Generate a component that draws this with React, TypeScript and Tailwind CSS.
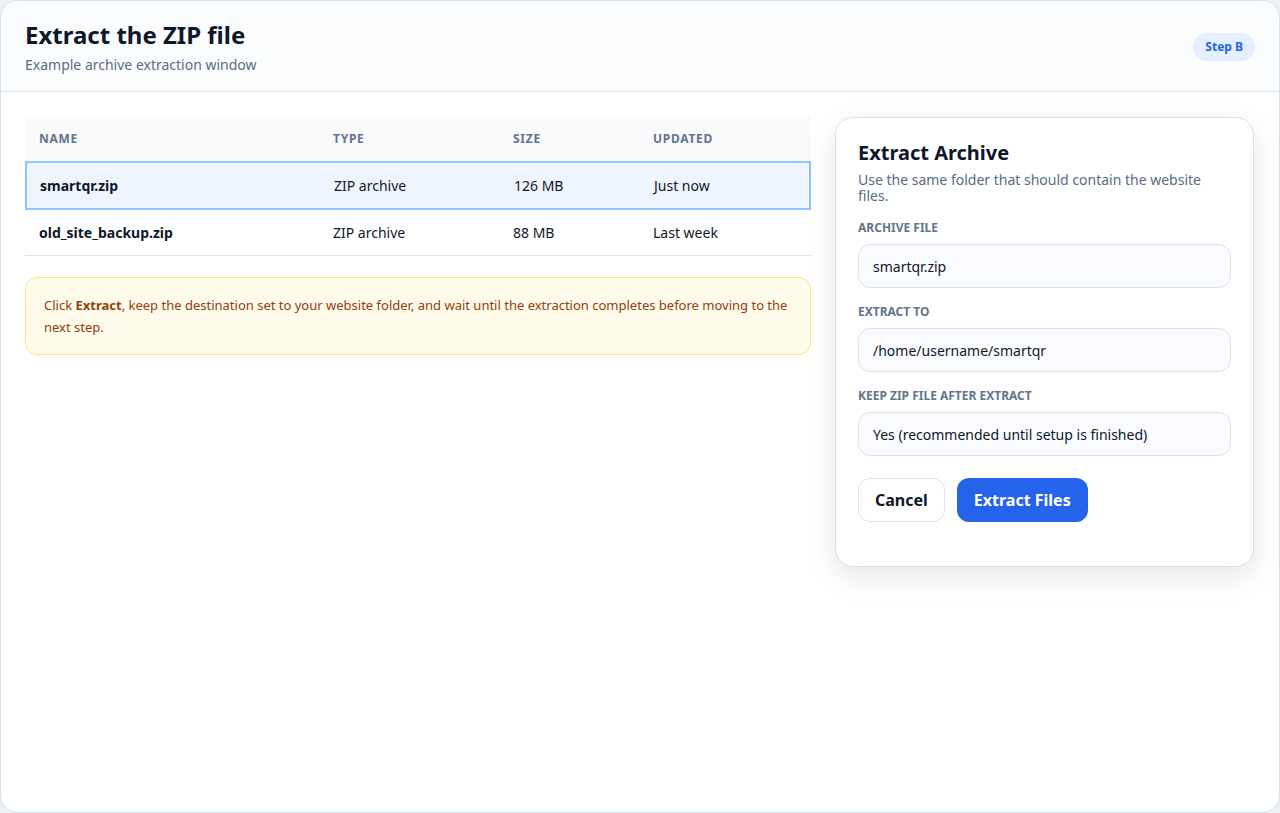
import React from 'react'

const rows = [
  { name: 'smartqr.zip', type: 'ZIP archive', size: '126 MB', updated: 'Just now', selected: true },
  { name: 'old_site_backup.zip', type: 'ZIP archive', size: '88 MB', updated: 'Last week', selected: false },
]

const Field = ({ label, value }: { label: string; value: string }) => (
  <div className="mt-[16px]">
    <div className="text-[12px] font-bold uppercase text-[#64748b] leading-[16px]">{label}</div>
    <div className="mt-[8px] h-[44px] rounded-[12px] border border-[#dbe3ee] bg-[#f9fbfe] px-[14px] flex items-center text-[14px] text-[#0f172a]">
      {value}
    </div>
  </div>
)

const App = () => {
  return (
    <div className="w-[1280px] h-[813px] bg-[#eef1f6] font-['Liberation_Sans']">
      <div className="h-[813px] rounded-[18px] border border-[#d7dfeb] bg-white overflow-hidden flex flex-col">
        <div className="h-[91px] shrink-0 border-b border-[#dde4ee] bg-[#fbfcfe] px-[24px] flex items-start justify-between">
          <div className="pt-[19px]">
            <h1 className="text-[24px] font-bold leading-[30px] text-[#0f172a]">Extract the ZIP file</h1>
            <p className="mt-[6px] text-[14px] leading-[18px] text-[#5b6b82]">Example archive extraction window</p>
          </div>
          <span className="mt-[32px] rounded-full bg-[#e6efff] px-[12px] py-[6px] text-[12px] font-bold text-[#2563eb] leading-[16px]">
            Step B
          </span>
        </div>

        <div className="flex gap-[24px] pl-[24px] pr-[25px] pt-[25px]">
          <div className="w-[787px]">
            <div className="grid grid-cols-[294px_180px_140px_1fr] h-[44px] items-center bg-[#f8fafc] px-[14px] text-[12px] font-bold tracking-[0.06em] text-[#64748b]">
              <div>NAME</div>
              <div>TYPE</div>
              <div>SIZE</div>
              <div>UPDATED</div>
            </div>
            {rows.map((r) => (
              <div
                key={r.name}
                className={
                  r.selected
                    ? 'grid grid-cols-[294px_180px_140px_1fr] h-[49px] items-center bg-[#eff5ff] border-2 border-[#93c5fd] px-[13px] text-[14px] text-[#0f172a]'
                    : 'grid grid-cols-[294px_180px_140px_1fr] h-[46px] items-center border-b border-[#dde4ee] px-[14px] text-[14px] text-[#0f172a]'
                }
              >
                <div className="font-bold">{r.name}</div>
                <div>{r.type}</div>
                <div>{r.size}</div>
                <div>{r.updated}</div>
              </div>
            ))}
            <div className="mt-[21px] rounded-[12px] border border-[#fde68a] bg-[#fffbeb] px-[18px] py-[16px] text-[13px] leading-[22px] text-[#92400e]">
              Click <b>Extract</b>, keep the destination set to your website folder, and wait until the extraction completes before moving to the next step.
            </div>
          </div>

          <div className="w-[419px] shrink-0">
            <div className="rounded-[18px] border border-[#d7dfeb] bg-white px-[22px] pt-[22px] pb-[44px] shadow-[0_10px_30px_rgba(15,23,42,0.1)]">
              <h2 className="text-[20px] font-bold leading-[26px] text-[#0f172a]">Extract Archive</h2>
              <p className="mt-[6px] text-[14px] leading-[16px] text-[#5b6b82]">
                Use the same folder that should contain the website files.
              </p>
              <Field label="Archive file" value="smartqr.zip" />
              <Field label="Extract to" value="/home/username/smartqr" />
              <Field label="Keep zip file after extract" value="Yes (recommended until setup is finished)" />
              <div className="mt-[22px] flex gap-[12px]">
                <button className="h-[44px] rounded-[12px] border border-[#dbe3ee] bg-white px-[16px] text-[16px] font-bold text-[#0f172a]">
                  Cancel
                </button>
                <button className="h-[44px] rounded-[12px] bg-[#2563eb] px-[17px] text-[16px] font-bold text-white">
                  Extract Files
                </button>
              </div>
            </div>
          </div>
        </div>
      </div>
    </div>
  )
}

export default App
